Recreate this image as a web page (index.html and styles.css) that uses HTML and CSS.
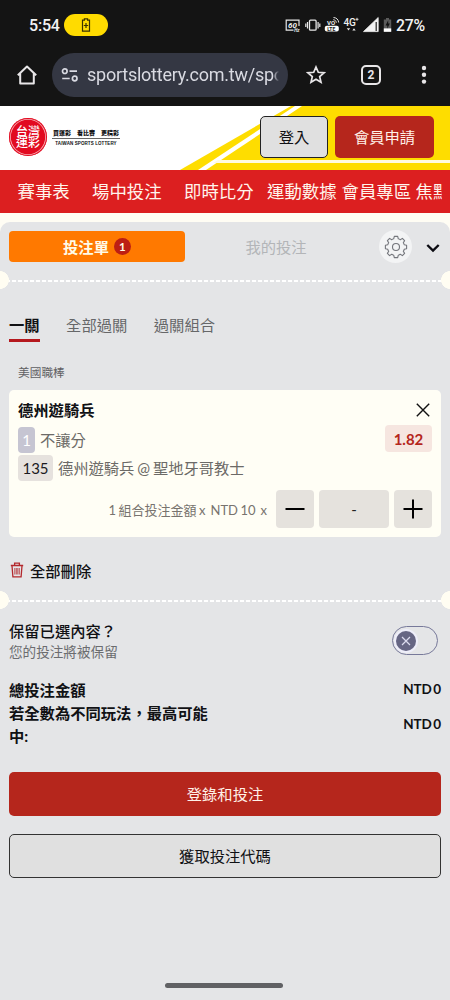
FILE: index.html
```
<!DOCTYPE html>
<html lang="zh-Hant">
<head>
<meta charset="utf-8">
<meta name="viewport" content="width=device-width, initial-scale=1">
<title>台灣運彩</title>
<link rel="stylesheet" href="styles.css">
</head>
<body>
<div class="phone">
  <div class="status">
    <span class="clock">5:54</span>
    <span class="charge-pill">
      <svg width="10" height="14" viewBox="0 0 10 14"><path d="M3.4 2.2V.8h3.2v1.4h1.9v10.900h-7V2.200z" fill="none" stroke="#3a3200" stroke-width="1.200"/><path d="M5 5v5M2.800 7.500h4.400" stroke="#3a3200" stroke-width="1.200"/></svg>
    </span>
    <svg class="status-icons" width="108" height="18" viewBox="0 0 108 18" fill="none" stroke="#e8e8e8">
      <path d="M8.500 14.200H1.200V4.200H14V10" stroke-width="1.200"/>
      <text x="3" y="12.200" class="hz">60</text><text x="9.200" y="16.200" class="hz-sm">Hz</text>
      <rect x="24.500" y="4.200" width="6.600" height="10" rx="1" stroke-width="1.300"/>
      <path d="M22.500 6v6.500M33.100 6v6.500M20.800 7.500v3.500M34.800 7.500v3.500" stroke-width="1.200"/>
      <text x="42" y="8.700" class="vo">VO</text>
      <path d="M48.500 1.500c3 .2 5 2.200 5.200 5M48.300 3.700c1.800.2 2.900 1.300 3 3" stroke-width="1"/>
      <rect x="39.800" y="9.700" width="14" height="5.800" rx="2" fill="#fff" stroke="none"/>
      <text x="42.200" y="14.500" class="lte">LTE</text>
      <text x="58.500" y="10" class="g4">4G</text><path d="M72 1.800v3M70.500 3.300h3" stroke-width=".9"/>
      <path d="M61.800 12.300h3.400l-1.700 2.200zM67.300 14.500h3.400L69 12.300z" fill="#e8e8e8" stroke="none"/>
      <path d="M78.500 15.600L93.200 1.500v14.100z" fill="#f2f2f2" stroke="#f2f2f2" stroke-width=".8"/>
      <path d="M91.200 6v9" stroke="#222" stroke-width="1.200"/>
      <path d="M98.800 3.400h2.200V2h3v1.400h2.200v12.400h-7.400z" fill="#5b5b5b" stroke="none"/>
      <path d="M98.800 12.400h7.400v3.400h-7.400z" fill="#fff" stroke="none"/>
      <path d="M103.200 4.200l-2.600 5.200h1.700v3l2.500-4.800h-1.600z" fill="#111" stroke="none"/>
    </svg>
    <span class="percent">27%</span>
  </div>

  <div class="browser">
    <svg class="home" width="22" height="22" viewBox="0 0 22 22"><path d="M4.200 9.500V19.400h13.600V9.500M1.800 11.200L11 2.500l9.200 8.700" fill="none" stroke="#e8e6e8" stroke-width="2" stroke-linejoin="round"/></svg>
    <div class="url">
      <svg width="18" height="14" viewBox="0 0 18 14" fill="none" stroke="#d9dae2" stroke-width="1.700"><circle cx="3.800" cy="3.200" r="2.300"/><path d="M8.500 3.200h7.500M1.200 10.500h7.500"/><circle cx="13.700" cy="10.500" r="2.300"/></svg>
      <span class="address">sportslottery.com.tw/spo</span>
    </div>
    <svg class="star" width="20" height="20" viewBox="0 0 20 20"><path d="M10 2l2.300 5.300 5.700.5-4.300 3.800 1.300 5.600-5-3-5 3 1.300-5.600L2 7.800l5.700-.5z" fill="none" stroke="#e8e6e8" stroke-width="1.700"/></svg>
    <span class="tabcount">2</span>
    <svg class="dots" width="6" height="20" viewBox="0 0 6 20" fill="#e8e6e8"><circle cx="3" cy="3" r="2.200"/><circle cx="3" cy="9.800" r="2.200"/><circle cx="3" cy="16.600" r="2.200"/></svg>
  </div>

  <header class="brand">
    <svg class="swoosh" width="270" height="64" viewBox="0 0 270 64">
      <path d="M0 64L111 0H270V64z" fill="#fedd00"/>
      <path d="M18 64L115 0h7L26 64z" fill="#fff"/>
      <path d="M38 54H270v3H33z" fill="#fffbe0"/>
    </svg>
    <div class="seal"><span>台灣</span><span>運彩</span></div>
    <div class="slogan">
      <div class="slogan-zh"><span>買運彩</span><span>看比賽</span><span>更精彩</span></div>
      <div class="slogan-en">TAIWAN SPORTS LOTTERY</div>
    </div>
    <div class="account">
      <button class="btn login">登入</button>
      <button class="btn join">會員申請</button>
    </div>
  </header>

  <nav class="nav">
    <span>賽事表</span><span>場中投注</span><span>即時比分</span><span>運動數據</span><span>會員專區</span><span>焦點</span>
  </nav>

  <main class="slip">
    <div class="slip-head">
      <div class="slip-tab active">投注單<span class="count">1</span></div>
      <div class="slip-tab mine">我的投注</div>
      <span class="gear">
        <svg width="24" height="24" viewBox="-12 -12 24 24" fill="none" stroke="#74767c" stroke-width="1.100" stroke-linejoin="round"><circle r="3.500"/><path d="M-1.700-10.600H1.700L2.300-8.200Q3.400-7.900 4.300-7.300L6.400-8.600 8.600-6.400 7.300-4.300Q7.900-3.400 8.200-2.300L10.600-1.700V1.700L8.200 2.300Q7.900 3.400 7.300 4.300L8.600 6.400 6.400 8.600 4.300 7.300Q3.400 7.900 2.300 8.200L1.700 10.600H-1.700L-2.300 8.200Q-3.400 7.900-4.300 7.300L-6.400 8.600-8.600 6.400-7.300 4.300Q-7.900 3.400-8.200 2.300L-10.600 1.700V-1.700L-8.200-2.300Q-7.900-3.400-7.300-4.300L-8.600-6.400-6.400-8.600-4.300-7.300Q-3.400-7.900-2.300-8.200z"/></svg>
      </span>
      <svg class="chevron" width="14" height="10" viewBox="0 0 14 10"><path d="M1.300 2L7 7.500 12.700 2" fill="none" stroke="#0b0b12" stroke-width="2.400"/></svg>
    </div>
    <div class="perforation"></div>

    <div class="modes"><span class="on">一關</span><span>全部過關</span><span>過關組合</span></div>
    <div class="league">美國職棒</div>

    <section class="card">
      <div class="card-title"><span>德州遊騎兵</span>
        <svg width="14" height="14" viewBox="0 0 14 14"><path d="M.8.800l12.400 12.400M13.200.800L.8 13.200" stroke="#111" stroke-width="1.400"/></svg>
      </div>
      <div class="market"><span class="tag one">1</span><span class="label">不讓分</span><span class="odds">1.82</span></div>
      <div class="match"><span class="tag">135</span><span class="label">德州遊騎兵 @ 聖地牙哥教士</span></div>
      <div class="stake">
        <span class="stake-label">1 組合投注金額 x&nbsp; NTD 10&nbsp; x</span>
        <button class="step"><svg width="20" height="20" viewBox="0 0 20 20"><path d="M.5 10h19" stroke="#000" stroke-width="2"/></svg></button>
        <span class="amount">-</span>
        <button class="step"><svg width="20" height="20" viewBox="0 0 20 20"><path d="M.5 10h19M10 .5v19" stroke="#000" stroke-width="2"/></svg></button>
      </div>
    </section>

    <div class="clear">
      <svg width="14" height="16" viewBox="0 0 14 16" fill="none" stroke="#b3282d"><path d="M.8 3.500h12.400M4.600 3.300V1.200h4.800v2.100M2 3.700l.9 11.100h8.200L12 3.700" stroke-width="1.300"/><path d="M4.800 6v6.500M6.300 6v6.500M7.800 6v6.500M9.300 6v6.500" stroke-width=".8"/></svg>
      <span>全部刪除</span>
    </div>
    <div class="perforation"></div>

    <div class="keep">
      <div class="keep-text"><div class="keep-title">保留已選內容？</div><div class="keep-sub">您的投注將被保留</div></div>
      <span class="toggle"><span class="knob"><svg width="10" height="10" viewBox="0 0 10 10"><path d="M1 1l8 8M9 1L1 9" stroke="#dcdcf0" stroke-width="1.200"/></svg></span></span>
    </div>

    <div class="totals">
      <div class="total"><span class="total-name">總投注金額</span><span class="sum">NTD 0</span></div>
      <div class="total"><span class="total-name">若全數為不同玩法，最高可能中:</span><span class="sum">NTD 0</span></div>
    </div>

    <div class="actions">
      <button class="btn submit">登錄和投注</button>
      <button class="btn code">獲取投注代碼</button>
    </div>
    <div class="gesture"></div>
  </main>
</div>
</body>
</html>
```
FILE: styles.css
```
* { box-sizing: border-box; }

body {
  margin: 0;
  font-family: Lato, "Noto Sans CJK TC", sans-serif;
  font-size: 15.3px;
  color: #101114;
}

button { font: inherit; padding: 0; border: 0; }
svg { display: block; flex: none; }

.phone {
  width: 450px;
  height: 1000px;
  display: flex;
  flex-direction: column;
  overflow: hidden;
  background: #fffdf4;
}

/* Device status bar */
.status {
  height: 50px;
  flex: none;
  display: flex;
  align-items: center;
  padding: 0 0 0 29px;
  background: #141414;
  color: #f3f3f3;
  font-family: Roboto, sans-serif;
  font-weight: 500;
}
.clock { font-size: 16px; width: 35px; letter-spacing: -.2px; }
.charge-pill {
  width: 44px;
  height: 22px;
  border-radius: 11px;
  background: #ffdb00;
  display: flex;
  align-items: center;
  justify-content: center;
}
.status-icons { margin-left: 177px; }
.status-icons text { fill: #f0f0f0; stroke: none; font-family: Roboto, sans-serif; font-weight: 700; }
.status-icons .hz { font-size: 8px; font-style: italic; }
.status-icons .hz-sm { font-size: 4.500px; font-style: italic; }
.status-icons .vo { font-size: 6px; }
.status-icons .lte { font-size: 5px; fill: #222; }
.status-icons .g4 { font-size: 10px; font-weight: 500; letter-spacing: -.3px; }
.percent { font-size: 15.800px; margin-left: 3px; letter-spacing: -.2px; padding-top: 1px; }

/* Browser toolbar */
.browser {
  height: 56px;
  flex: none;
  display: flex;
  align-items: center;
  padding: 0 0 7px 16px;
  background: #141414;
}
.url {
  width: 236px;
  height: 44px;
  margin-left: 14px;
  padding: 0 9px;
  border-radius: 22px;
  background: #343743;
  display: flex;
  align-items: center;
  gap: 8px;
}
.address {
  width: 192px;
  overflow: hidden;
  white-space: nowrap;
  color: #d9dae2;
  font: 18px/24px Roboto, sans-serif;
  letter-spacing: -.24px;
  -webkit-mask-image: linear-gradient(90deg, #000 186px, transparent);
  mask-image: linear-gradient(90deg, #000 186px, transparent);
}
.star { margin-left: 18px; }
.tabcount {
  width: 20px;
  height: 20px;
  margin-left: 35px;
  border: 2px solid #e8e6e8;
  border-radius: 5px;
  color: #e8e6e8;
  font: 700 12px/16px Roboto, sans-serif;
  text-align: center;
}
.dots { margin-left: 40px; }

/* Site header */
.brand {
  position: relative;
  height: 64px;
  flex: none;
  display: flex;
  align-items: center;
  padding: 0 16px 2px 9px;
  background: #fff;
}
.swoosh { position: absolute; right: 0; top: 0; }
.seal {
  width: 38px;
  height: 38px;
  border-radius: 50%;
  background: #e20a20;
  box-shadow: inset 0 0 0 1px #e20a20, inset 0 0 0 1.800px #f8b0b5;
  color: #fff;
  font-weight: 500;
  font-size: 12px;
  line-height: 11.500px;
  display: flex;
  flex-direction: column;
  align-items: center;
  justify-content: center;
}
.slogan { width: 68px; margin-left: 5px; }
.slogan-zh {
  display: flex;
  justify-content: space-between;
  padding: 0 1px;
  border-bottom: 1px solid #666;
  font-weight: 900;
  font-size: 6px;
  line-height: 11px;
}
.slogan-en {
  font: 700 4.500px/9px "Liberation Sans", sans-serif;
  letter-spacing: .1px;
  text-align: center;
  white-space: nowrap;
}
.account { position: relative; display: flex; gap: 7px; margin-left: auto; }
.btn { border-radius: 5px; line-height: 42px; text-align: center; }
.login { width: 68px; height: 42px; background: #e0e0e0; border: 1px solid #222; line-height: 41px; color: #101114; }
.join { width: 99px; height: 42px; background: #b5261c; color: #fff0e8; line-height: 43px; }

.nav {
  height: 43px;
  flex: none;
  display: flex;
  padding-left: 17.500px;
  margin-bottom: 9px;
  background: #dc1f20;
  color: #fff4ec;
  font-size: 17.400px;
  line-height: 43px;
  white-space: nowrap;
}
.nav span { flex: none; width: 74.500px; }
.nav span:nth-child(2) { width: 92px; }
.nav span:nth-child(3) { width: 83px; }
.nav span:nth-child(5) { width: 74px; }
.nav span:nth-child(6) { width: 26px; overflow: hidden; }

/* Bet slip */
.slip {
  flex: 1;
  display: flex;
  flex-direction: column;
  padding: 9px 9px 0;
  background: #e4e5e7;
  border-radius: 10px 10px 0 0;
}
.slip-head { display: flex; align-items: center; height: 31px; }
.slip-tab { display: flex; align-items: center; justify-content: center; height: 31px; line-height: 32px; }
.slip-tab.active {
  width: 176px;
  gap: 5px;
  border-radius: 4px;
  background: #ff7900;
  color: #fffbe8;
  font-weight: 700;
}
.count {
  width: 17px;
  height: 17px;
  border-radius: 50%;
  background: #bd1e13;
  font-size: 11.500px;
  line-height: 17px;
  text-align: center;
}
.slip-tab.mine { width: 182px; color: #b3b5b8; }
.gear {
  width: 33px;
  height: 33px;
  margin-left: 12px;
  border-radius: 50%;
  background: #f3f4f5;
  display: flex;
  align-items: center;
  justify-content: center;
}
.chevron { margin-left: 14px; margin-top: 2px; }

.perforation {
  height: 18px;
  flex: none;
  margin: 9px -9px 0;
  background:
    radial-gradient(circle at 0 9px, #fffdf2 8.600px, transparent 9.200px),
    radial-gradient(circle at 100% 9px, #fffdf2 8.600px, transparent 9.200px),
    repeating-linear-gradient(90deg, #fff 0 4px, transparent 4px 6px) 0 9px / 100% 2px no-repeat;
}

.modes { display: flex; gap: 26.500px; margin-top: 24px; line-height: 25px; height: 29px; color: #666769; }
.modes .on { color: #101114; font-weight: 700; border-bottom: 3px solid #b5181e; height: 29px; }
.league { margin: 22px 0 0 9px; font-size: 11.700px; line-height: 17px; color: #5f6063; }

.card {
  height: 147px;
  flex: none;
  margin-top: 9px;
  padding: 9px 9px 0;
  border-radius: 5px;
  background: #fffef5;
}
.card-title { display: flex; justify-content: space-between; align-items: center; height: 22px; padding-right: 2px; font-weight: 700; line-height: 23px; }
.market, .match { display: flex; align-items: center; gap: 5px; height: 28px; color: #6c6a67; }
.market { margin-top: 5px; }
.match { letter-spacing: -.05px; word-spacing: -.8px; }
.tag { width: 35px; height: 26px; border-radius: 4px; background: #e6e2de; color: #1b1b1e; line-height: 26px; text-align: center; font-size: 15px; }
.tag.one { width: 17px; background: #c6c5d2; color: #fff; }
.label { line-height: 26px; }
.odds {
  width: 47px;
  height: 27px;
  margin: -3px 0 0 auto;
  border-radius: 4px;
  background: #f6e6e0;
  color: #b5261c;
  font-size: 15px;
  font-weight: 700;
  line-height: 28px;
  text-align: center;
}
.stake { display: flex; align-items: center; justify-content: flex-end; gap: 5px; margin-top: 8px; color: #77736e; font-size: 13px; }
.stake-label { margin-right: 4px; word-spacing: -.85px; }
.step { width: 38px; height: 38px; border-radius: 4px; background: #e5e2dd; display: flex; align-items: center; justify-content: center; }
.amount { width: 70px; height: 38px; border-radius: 4px; background: #e5e2dd; line-height: 38px; text-align: center; font-size: 15px; color: #222; }

.clear { display: flex; align-items: center; gap: 6px; height: 24px; margin: 22px 0 0 1px; line-height: 24px; font-weight: 500; }
.clear svg { margin-top: -2px; }
.clear + .perforation { margin-top: 8px; }

.keep { display: flex; justify-content: space-between; align-items: center; margin-top: 11px; padding-right: 3px; }
.keep-title { font-weight: 500; line-height: 23px; }
.keep-sub { font-size: 13.600px; line-height: 18px; color: #6b6c6f; }
.toggle { width: 46px; height: 29px; padding: 0 3px; border: 1px solid #77799a; border-radius: 15px; display: flex; align-items: center; }
.knob { width: 20px; height: 20px; border-radius: 50%; background: #666684; box-shadow: 0 0 0 2px #eeeefa; display: flex; align-items: center; justify-content: center; }

.totals { margin-top: 18px; font-weight: 700; line-height: 23px; }
.total { display: flex; justify-content: space-between; align-items: center; }
.total-name { width: 204px; }
.sum { font-size: 13.500px; letter-spacing: -.2px; word-spacing: -1.200px; margin-top: -2px; }

.actions { display: flex; flex-direction: column; gap: 18px; margin-top: 24px; }
.submit { height: 44px; background: #b5261c; color: #fff0e8; line-height: 44px; }
.code { height: 44px; background: #e0e0e0; border: 1px solid #333; color: #101114; }

.gesture { width: 118px; height: 5px; margin: auto auto 12px 156px; border-radius: 3px; background: #606164; }
```
